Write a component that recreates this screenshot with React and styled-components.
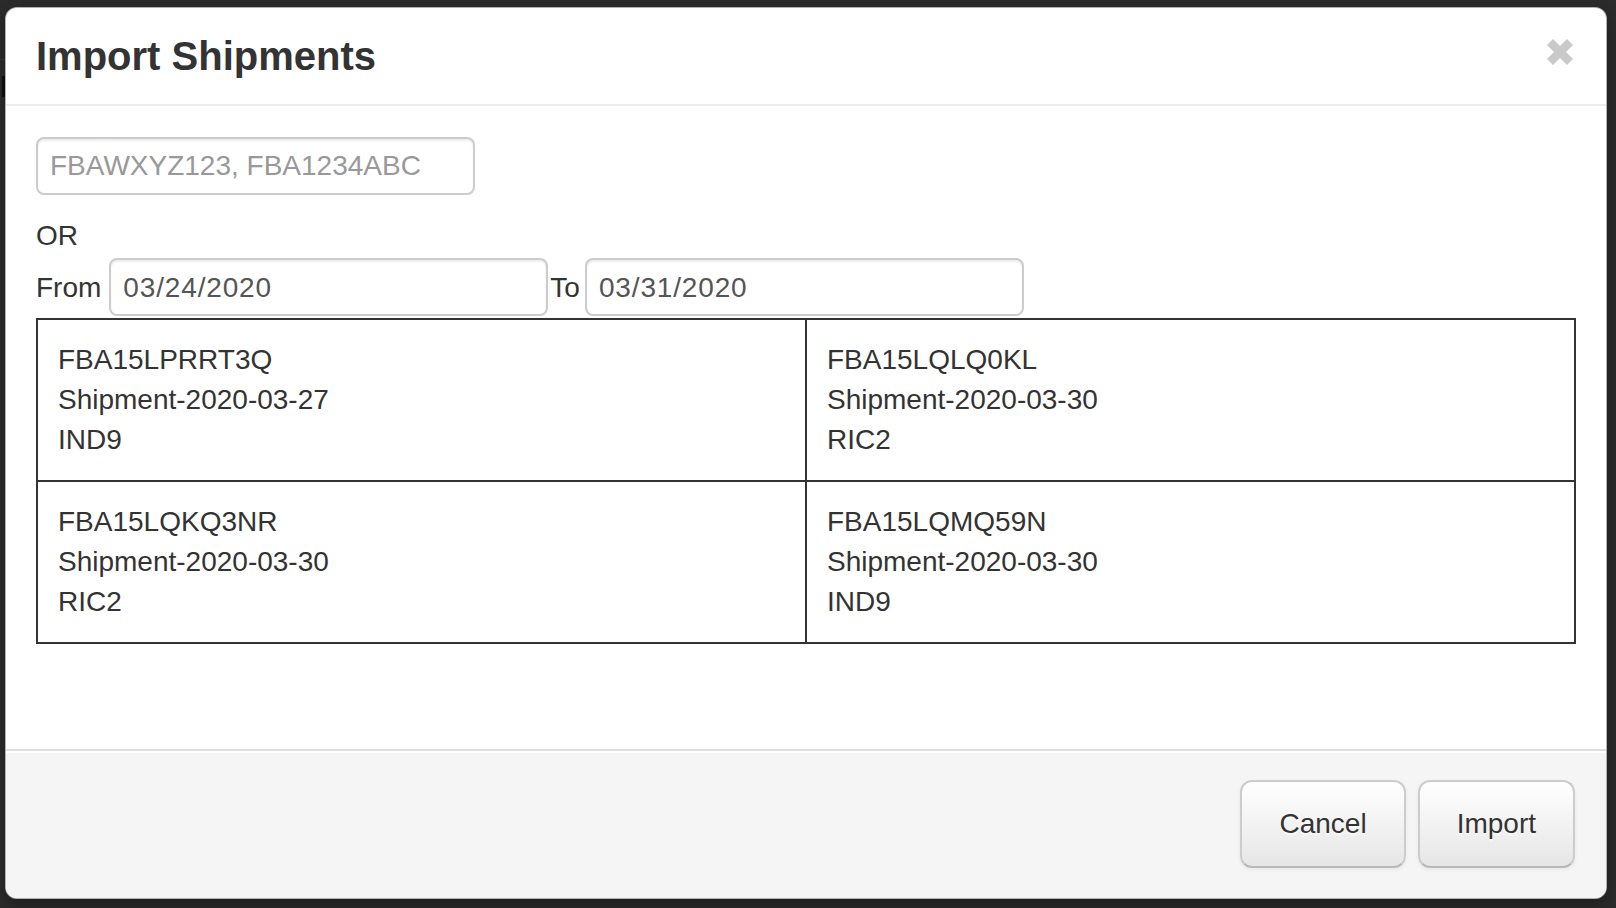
import React from "react";
import styled, { createGlobalStyle } from "styled-components";

const GlobalStyle = createGlobalStyle`
  * { box-sizing: border-box; }
  html, body {
    margin: 0;
    padding: 0;
    background: #2b2b2b;
    font-family: "Liberation Sans", Arial, Helvetica, sans-serif;
    overflow: hidden;
  }
`;

const Backdrop = styled.div`
  position: relative;
  width: 1616px;
  height: 908px;
  padding: 7px 9px 9px 5px;
  background: #2b2b2b;
`;

const PeekLine = styled.span`
  position: absolute;
  left: 0;
  top: 59px;
  width: 6px;
  height: 1px;
  background: #383838;
`;

const PeekMark = styled.span`
  position: absolute;
  left: 2px;
  top: 76px;
  width: 4px;
  height: 21px;
  background: #0e0e0e;
`;

const Modal = styled.div`
  position: relative;
  width: 1602px;
  height: 892px;
  display: flex;
  flex-direction: column;
  background: #fff;
  border: 1px solid rgba(0, 0, 0, 0.3);
  border-radius: 12px;
  overflow: hidden;
  box-shadow: 0 6px 14px rgba(0, 0, 0, 0.3);
  color: #333;
  font-size: 28px;
  line-height: 40px;
`;

const Header = styled.div`
  display: flex;
  justify-content: space-between;
  align-items: flex-start;
  padding: 18px 30px;
  border-bottom: 2px solid #ececec;
`;

const Title = styled.h3`
  margin: 0;
  font-size: 40px;
  line-height: 60px;
  font-weight: 700;
  color: #333;
`;

const CloseButton = styled.button`
  display: flex;
  margin: 11px 1px 0 0;
  padding: 0;
  border: 0;
  background: transparent;
  cursor: pointer;
`;

const Body = styled.div`
  flex: 1;
  padding: 31px 30px 30px;
`;

const TextInput = styled.input`
  display: block;
  width: ${(p) => p.$width || 439}px;
  height: 58px;
  margin: 0;
  padding: ${(p) => (p.$dense ? "2px 12px 0" : "0 12px")};
  border: 2px solid #ccc;
  border-radius: 8px;
  font-family: inherit;
  font-size: 28px;
  letter-spacing: ${(p) => (p.$dense ? "0.85px" : "0")};
  color: #555;
  background: #fff;
  box-shadow: inset 0 2px 2px rgba(0, 0, 0, 0.075);
  outline: none;

  &::placeholder {
    color: #999;
  }
`;

const IdsInput = styled(TextInput)`
  margin-bottom: 21px;
`;

const OrLine = styled.div`
  height: 40px;
`;

const DateRow = styled.div`
  display: flex;
  align-items: baseline;
  margin-top: 2px;
`;

const RangeLabel = styled.label`
  margin: ${(p) => p.$margin};
`;

const Grid = styled.div`
  display: grid;
  grid-template-columns: 1fr 1fr;
  margin-top: 2px;
  border-top: 2px solid #333;
  border-left: 2px solid #333;
`;

const Cell = styled.div`
  padding: 20px;
  border-right: 2px solid #333;
  border-bottom: 2px solid #333;
  font-size: 28px;
  line-height: 40px;
  color: #333;
`;

const CellLine = styled.div``;

const Footer = styled.div`
  display: flex;
  justify-content: flex-end;
  gap: 12px;
  padding: 29px 31px 30px 30px;
  background: #f5f5f5;
  border-top: 2px solid #ddd;
  box-shadow: inset 0 2px 0 #fff;
`;

const Button = styled.button`
  height: 88px;
  padding: 0 37px;
  font-family: inherit;
  font-size: 28px;
  line-height: 40px;
  color: #333;
  text-shadow: 0 2px 2px rgba(255, 255, 255, 0.75);
  background: linear-gradient(to bottom, #ffffff, #e6e6e6);
  border: 2px solid #ccc;
  border-bottom-color: #b8b8b8;
  border-radius: 12px;
  box-shadow: inset 0 2px 0 rgba(255, 255, 255, 0.2), 0 2px 4px rgba(0, 0, 0, 0.05);
  cursor: pointer;
`;

const CloseIcon = () => (
  <svg width="30" height="30" viewBox="0 0 30 30" aria-hidden="true">
    <g stroke="#c9c9c9" strokeWidth="8.4" strokeLinecap="butt">
      <line x1="5" y1="5" x2="25" y2="25" />
      <line x1="25" y1="5" x2="5" y2="25" />
    </g>
  </svg>
);

const shipments = [
  ["FBA15LPRRT3Q", "Shipment-2020-03-27", "IND9"],
  ["FBA15LQLQ0KL", "Shipment-2020-03-30", "RIC2"],
  ["FBA15LQKQ3NR", "Shipment-2020-03-30", "RIC2"],
  ["FBA15LQMQ59N", "Shipment-2020-03-30", "IND9"],
];

export default function App() {
  return (
    <>
      <GlobalStyle />
      <Backdrop>
        <PeekLine />
        <PeekMark />
        <Modal>
          <Header>
            <Title>Import Shipments</Title>
            <CloseButton aria-label="Close">
              <CloseIcon />
            </CloseButton>
          </Header>
          <Body>
            <IdsInput type="text" placeholder="FBAWXYZ123, FBA1234ABC" $width={439} />
            <OrLine>OR</OrLine>
            <DateRow>
              <RangeLabel $margin="0 8px 0 0">From</RangeLabel>
              <TextInput type="text" defaultValue="03/24/2020" $dense />
              <RangeLabel $margin="0 5px 0 2px">To</RangeLabel>
              <TextInput type="text" defaultValue="03/31/2020" $dense />
            </DateRow>
            <Grid>
              {shipments.map((s) => (
                <Cell key={s[0]}>
                  {s.map((line) => (
                    <CellLine key={line}>{line}</CellLine>
                  ))}
                </Cell>
              ))}
            </Grid>
          </Body>
          <Footer>
            <Button>Cancel</Button>
            <Button>Import</Button>
          </Footer>
        </Modal>
      </Backdrop>
    </>
  );
}
